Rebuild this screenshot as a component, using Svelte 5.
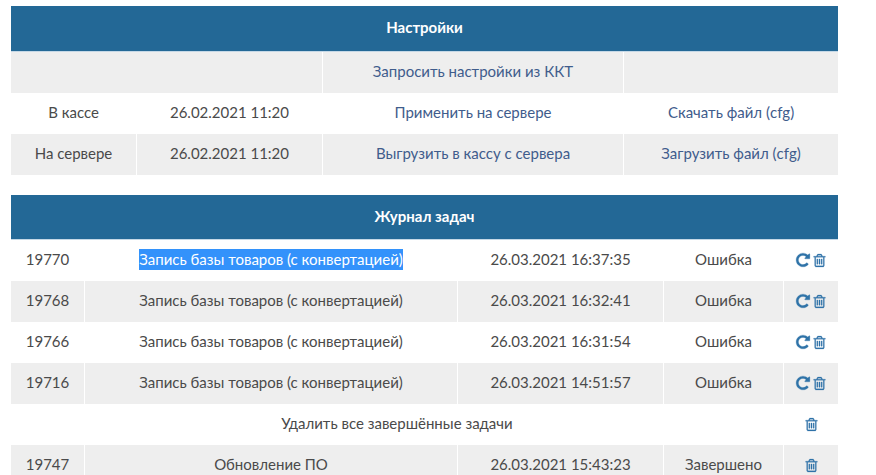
<script>
  const settings = [
    { label: '', date: '', action: 'Запросить настройки из ККТ', file: '' },
    { label: 'В кассе', date: '26.02.2021 11:20', action: 'Применить на сервере', file: 'Скачать файл (cfg)' },
    { label: 'На сервере', date: '26.02.2021 11:20', action: 'Выгрузить в кассу с сервера', file: 'Загрузить файл (cfg)' }
  ];

  const tasks = [
    { id: 19770, name: 'Запись базы товаров (с конвертацией)', time: '26.03.2021 16:37:35', status: 'Ошибка', retry: true, selected: true },
    { id: 19768, name: 'Запись базы товаров (с конвертацией)', time: '26.03.2021 16:32:41', status: 'Ошибка', retry: true },
    { id: 19766, name: 'Запись базы товаров (с конвертацией)', time: '26.03.2021 16:31:54', status: 'Ошибка', retry: true },
    { id: 19716, name: 'Запись базы товаров (с конвертацией)', time: '26.03.2021 14:51:57', status: 'Ошибка', retry: true }
  ];

  const finished = [
    { id: 19747, name: 'Обновление ПО', time: '26.03.2021 15:43:23', status: 'Завершено' }
  ];
</script>

{#snippet repeatIcon()}
  <svg class="icon repeat" viewBox="0 0 1792 1792" aria-hidden="true">
    <path d="M1664 256v448q0 26-19 45t-45 19h-448q-42 0-59-40-17-39 14-69l138-138q-148-137-349-137-104 0-198.5 40.5t-163.5 109.5-109.5 163.5-40.5 198.5 40.5 198.5 109.5 163.5 163.5 109.5 198.5 40.5q119 0 225-52t179-147q7-10 23-12 15 0 25 9l137 138q9 8 9.5 20.5t-7.5 22.5q-109 132-264 204.5t-327 72.5q-156 0-298-61t-245-164-164-245-61-298 61-298 164-245 245-164 298-61q147 0 284.5 55.5t244.5 156.5l130-129q29-31 70-14 39 17 39 59z" />
  </svg>
{/snippet}

{#snippet trashIcon()}
  <svg class="icon" viewBox="0 0 1792 1792" aria-hidden="true">
    <path d="M704 736v576q0 14-9 23t-23 9h-64q-14 0-23-9t-9-23v-576q0-14 9-23t23-9h64q14 0 23 9t9 23zm256 0v576q0 14-9 23t-23 9h-64q-14 0-23-9t-9-23v-576q0-14 9-23t23-9h64q14 0 23 9t9 23zm256 0v576q0 14-9 23t-23 9h-64q-14 0-23-9t-9-23v-576q0-14 9-23t23-9h64q14 0 23 9t9 23zm128 724v-948h-896v948q0 22 7 40.5t14.5 27 10.5 8.5h832q3 0 10.5-8.5t14.5-27 7-40.5zm-672-1076h448l-48-117q-7-9-17-11h-317q-10 2-17 11zm928 32v64q0 14-9 23t-23 9h-96v948q0 83-47 143.5t-113 60.5h-832q-66 0-113-58.5t-47-141.5v-952h-96q-14 0-23-9t-9-23v-64q0-14 9-23t23-9h309l70-167q15-37 54-63t79-26h320q40 0 79 26t54 63l70 167h309q14 0 23 9t9 23z" />
  </svg>
{/snippet}

<div class="page">
  <table class="settings">
    <colgroup>
      <col style="width: 125px" />
      <col style="width: 186px" />
      <col style="width: 301px" />
      <col style="width: 215px" />
    </colgroup>
    <thead>
      <tr><th colspan="4">Настройки</th></tr>
    </thead>
    <tbody>
      {#each settings as row, i}
        <tr>
          {#if i === 0}
            <td colspan="2"></td>
          {:else}
            <td>{row.label}</td>
            <td>{row.date}</td>
          {/if}
          <td><a href="#top">{row.action}</a></td>
          <td><a href="#top">{row.file}</a></td>
        </tr>
      {/each}
    </tbody>
  </table>

  <table class="tasks">
    <colgroup>
      <col style="width: 73px" />
      <col style="width: 373px" />
      <col style="width: 206px" />
      <col style="width: 120px" />
      <col style="width: 55px" />
    </colgroup>
    <thead>
      <tr><th colspan="5">Журнал задач</th></tr>
    </thead>
    <tbody>
      {#each tasks as task}
        <tr>
          <td>{task.id}</td>
          <td><span class:selected={task.selected}>{task.name}</span></td>
          <td>{task.time}</td>
          <td>{task.status}</td>
          <td class="actions">{@render repeatIcon()}{@render trashIcon()}</td>
        </tr>
      {/each}
      <tr>
        <td colspan="4">Удалить все завершённые задачи</td>
        <td class="actions">{@render trashIcon()}</td>
      </tr>
      {#each finished as task}
        <tr>
          <td>{task.id}</td>
          <td>{task.name}</td>
          <td>{task.time}</td>
          <td>{task.status}</td>
          <td class="actions">{@render trashIcon()}</td>
        </tr>
      {/each}
    </tbody>
  </table>
</div>

<style>
  :global(body) {
    margin: 0;
    background: #fff;
    overflow: hidden;
  }

  .page {
    height: 475px;
    overflow: hidden;
    padding: 6px 38px 0 11px;
    box-sizing: border-box;
    font-family: Lato, "Open Sans", sans-serif;
    font-size: 15px;
    color: #4a4a4a;
  }

  table {
    width: 827px;
    table-layout: fixed;
    border-collapse: separate;
    border-spacing: 0;
  }

  .settings {
    margin-bottom: 20px;
  }

  th {
    height: 46px;
    padding: 0 0 3px;
    box-sizing: border-box;
    background: #236896;
    border-bottom: 1px solid #c5d8e6;
    color: #fff;
    font-size: 15px;
    font-weight: 700;
    text-align: center;
  }

  .tasks th {
    height: 45px;
    padding-bottom: 2px;
  }

  td {
    height: 41px;
    padding: 0 0 3px;
    box-sizing: border-box;
    text-align: center;
    border-left: 1px solid #fff;
  }

  td:first-child {
    border-left: 0;
  }

  tbody tr:nth-child(odd) {
    background: #eeeeee;
  }

  .tasks tbody tr:nth-child(odd) {
    background: #fff;
  }

  .tasks tbody tr:nth-child(even) {
    background: #eeeeee;
  }

  a {
    color: #3f5c8c;
    text-decoration: none;
  }

  .selected {
    display: inline-block;
    background: #3392fb;
    color: #fff;
    line-height: 21px;
  }

  .tasks .actions {
    font-size: 0;
    padding: 0 0 1px;
  }

  .icon {
    display: inline-block;
    width: 15px;
    height: 15px;
    fill: #2f73a8;
    stroke: #2f73a8;
    stroke-width: 30;
    vertical-align: middle;
  }

  .repeat {
    width: 16px;
    height: 16px;
    margin-right: 1px;
  }
</style>
